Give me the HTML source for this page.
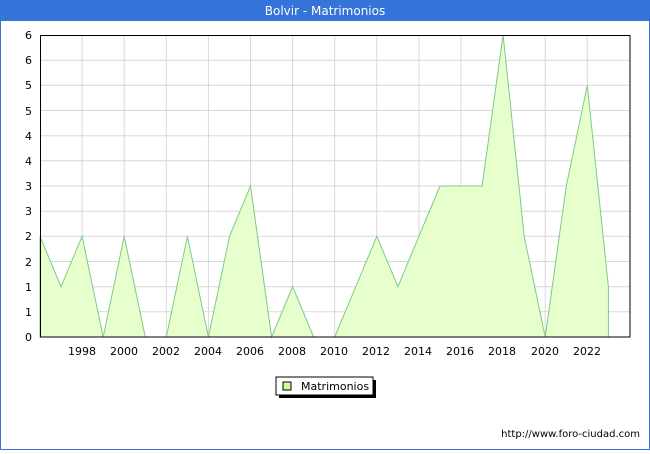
<!DOCTYPE html><html><head><style>body{margin:0;width:650px;height:450px;overflow:hidden;font-family:"DejaVu Sans","Liberation Sans",sans-serif}</style></head><body>
<svg width="650" height="450" xmlns="http://www.w3.org/2000/svg" font-family="DejaVu Sans, Liberation Sans, sans-serif" font-size="11">
<rect x="0.5" y="0.5" width="649" height="449" fill="#fff" stroke="#3473d8"/>
<rect x="0" y="0" width="650" height="21" fill="#3473d8"/>
<text x="325" y="15" fill="#fff" font-size="12" text-anchor="middle">Bolvir - Matrimonios</text>
<g stroke="#d8d8d8" stroke-width="1">
<line x1="40" y1="311.8" x2="630" y2="311.8"/><line x1="40" y1="286.7" x2="630" y2="286.7"/><line x1="40" y1="261.5" x2="630" y2="261.5"/><line x1="40" y1="236.3" x2="630" y2="236.3"/><line x1="40" y1="211.2" x2="630" y2="211.2"/><line x1="40" y1="186" x2="630" y2="186"/><line x1="40" y1="160.8" x2="630" y2="160.8"/><line x1="40" y1="135.7" x2="630" y2="135.7"/><line x1="40" y1="110.5" x2="630" y2="110.5"/><line x1="40" y1="85.3" x2="630" y2="85.3"/><line x1="40" y1="60.2" x2="630" y2="60.2"/>
<line x1="82.1" y1="35" x2="82.1" y2="337"/><line x1="124.2" y1="35" x2="124.2" y2="337"/><line x1="166.3" y1="35" x2="166.3" y2="337"/><line x1="208.4" y1="35" x2="208.4" y2="337"/><line x1="250.5" y1="35" x2="250.5" y2="337"/><line x1="292.6" y1="35" x2="292.6" y2="337"/><line x1="334.7" y1="35" x2="334.7" y2="337"/><line x1="376.8" y1="35" x2="376.8" y2="337"/><line x1="418.9" y1="35" x2="418.9" y2="337"/><line x1="461" y1="35" x2="461" y2="337"/><line x1="503.1" y1="35" x2="503.1" y2="337"/><line x1="545.2" y1="35" x2="545.2" y2="337"/><line x1="587.3" y1="35" x2="587.3" y2="337"/>
</g>
<polygon fill="#e6ffcc" stroke="#7fc98a" stroke-width="1" points="40,337 40,236.3 61,286.7 82.1,236.3 103.2,337 124.2,236.3 145.3,337 166.3,337 187.4,236.3 208.4,337 229.5,236.3 250.5,186 271.6,337 292.6,286.7 313.7,337 334.7,337 355.8,286.7 376.8,236.3 397.9,286.7 418.9,236.3 440,186 461,186 482.1,186 503.1,35 524.2,236.3 545.2,337 566.3,186 587.3,85.3 608.4,286.7 608.4,337"/>
<rect x="40.5" y="35.5" width="589.5" height="301.5" fill="none" stroke="#000"/>
<g text-anchor="end" fill="#000"><text x="32" y="39">6</text><text x="32" y="64">6</text><text x="32" y="89">5</text><text x="32" y="115">5</text><text x="32" y="140">4</text><text x="32" y="165">4</text><text x="32" y="190">3</text><text x="32" y="215">3</text><text x="32" y="240">2</text><text x="32" y="266">2</text><text x="32" y="291">1</text><text x="32" y="316">1</text><text x="32" y="341">0</text></g>
<g text-anchor="middle"><text x="82" y="355">1998</text><text x="124" y="355">2000</text><text x="166" y="355">2002</text><text x="208" y="355">2004</text><text x="250" y="355">2006</text><text x="292" y="355">2008</text><text x="334" y="355">2010</text><text x="376" y="355">2012</text><text x="418" y="355">2014</text><text x="460" y="355">2016</text><text x="502" y="355">2018</text><text x="545" y="355">2020</text><text x="587" y="355">2022</text></g>
<rect x="279" y="380" width="97" height="18" fill="#000"/>
<rect x="276" y="377" width="97" height="18" fill="#fff" stroke="#000"/>
<rect x="283" y="382" width="8" height="8" fill="#ccff99" stroke="#000"/>
<text x="301" y="390">Matrimonios</text>
<text x="640" y="437" text-anchor="end" font-size="10">http://www.foro-ciudad.com</text>
</svg></body></html>
